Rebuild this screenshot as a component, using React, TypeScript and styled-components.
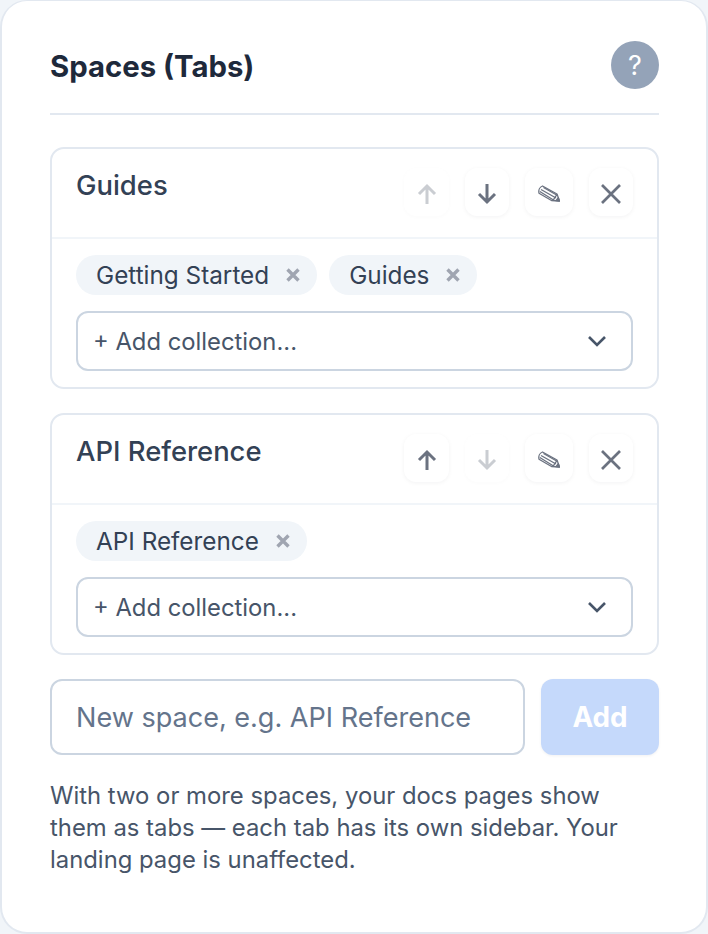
import React from 'react';
import styled, { createGlobalStyle } from 'styled-components';

const GlobalStyle = createGlobalStyle`
  html, body {
    margin: 0;
    background: #f1f5f9;
    font-family: Inter, "Liberation Sans", sans-serif;
  }
  * { box-sizing: border-box; }
`;

const Panel = styled.section`
  width: 708px;
  height: 934px;
  background: #fff;
  border: 2px solid #e2e8f0;
  border-top-width: 1px;
  border-radius: 27px;
  padding: 0 47px 0 48px;
`;

const Header = styled.header`
  display: flex;
  align-items: center;
  justify-content: space-between;
  height: 114px;
  padding-top: 40px;
  padding-bottom: 24px;
  border-bottom: 2px solid #e2e8f0;
  margin-bottom: 32px;
`;

const Title = styled.h2`
  margin: 2px 0 0;
  font-size: 29.3px;
  font-weight: 650;
  color: #1e293b;
`;

const HelpButton = styled.button`
  width: 48px;
  height: 48px;
  border: none;
  border-radius: 50%;
  padding: 0;
  background: #94a3b8;
  color: #fff;
  font: 400 27px Inter, sans-serif;
`;

const SpaceList = styled.div`
  display: flex;
  flex-direction: column;
  gap: 24px;
`;

const SpaceCard = styled.article`
  border: 2px solid #e2e8f0;
  border-radius: 14px;
`;

const SpaceHead = styled.div`
  display: flex;
  justify-content: space-between;
  height: 90px;
  padding: 19px 24px 0 24px;
  border-bottom: 2px solid #f1f5f9;
`;

const SpaceName = styled.h3`
  margin: 0;
  font-size: 27.4px;
  line-height: 34px;
  font-weight: 500;
  color: #334155;
`;

const Actions = styled.div`
  display: flex;
  gap: 16px;
  height: 48px;
`;

const IconButton = styled.button<{ $w: number; $off?: boolean }>`
  display: flex;
  align-items: center;
  justify-content: center;
  width: ${(p) => p.$w}px;
  height: 48px;
  padding: 3px 0 0;
  border: none;
  border-radius: 12px;
  background: #fff;
  color: #6b7280;
  box-shadow: 0 1px 4px rgba(15, 23, 42, ${(p) => (p.$off ? 0.02 : 0.05)});
  svg { opacity: ${(p) => (p.$off ? 0.35 : 1)}; }
`;

const SpaceBody = styled.div`
  display: flex;
  flex-direction: column;
  gap: 16px;
  padding: 16px 24px;
`;

const Chips = styled.div`
  display: flex;
  gap: 12px;
`;

const Chip = styled.span`
  display: flex;
  align-items: center;
  gap: 17px;
  height: 40px;
  padding: 0 17px 0 20px;
  border-radius: 20px;
  background: #f1f5f9;
  font-size: 24.3px;
  color: #334155;
`;

const SelectBox = styled.div`
  display: flex;
  align-items: center;
  justify-content: space-between;
  height: 60px;
  padding: 0 23px 0 15px;
  border: 2px solid #cbd5e1;
  border-radius: 12px;
  font-size: 23.8px;
  color: #475569;
`;

const AddRow = styled.form`
  display: flex;
  gap: 16px;
  margin: 24px 0 25px;
`;

const NameInput = styled.input`
  flex: 1;
  min-width: 0;
  height: 76px;
  padding: 0 24px;
  border: 2px solid #cbd5e1;
  border-radius: 12px;
  outline: none;
  font: 400 27.05px Inter, sans-serif;
  &::placeholder { color: #64748b; opacity: 1; }
`;

const AddButton = styled.button`
  width: 118px;
  height: 76px;
  border: none;
  border-radius: 12px;
  background: #c5d9fb;
  color: #fff;
  font: 700 27.8px Inter, sans-serif;
  box-shadow: 0 1px 3px rgba(15, 23, 42, 0.06);
`;

const Hint = styled.p`
  margin: 0;
  font-size: 23.85px;
  line-height: 32px;
  color: #475569;
`;

const ArrowIcon = ({ up }: { up?: boolean }) => (
  <svg width="24" height="24" viewBox="0 0 24 24" fill="none" stroke="currentColor" strokeWidth="3">
    <path d={up ? 'M12 22V4M4 12l8-8 8 8' : 'M12 2v18M4 12l8 8 8-8'} />
  </svg>
);

const PencilIcon = () => (
  <svg width="22" height="21" viewBox="0 -2 22 21" fill="none" stroke="currentColor" strokeWidth="1.300" strokeLinejoin="round">
    <path d="M4.500 1 19 9l2.500 7-8-.500L1 8.200C.300 5 1.800 2 4.500 1z" />
    <path d="M3 4.500 18 13M1.800 6.500 15.500 15M5.500 2.500 19.500 10.500M15 15.300l4-6" />
    <path d="M21.500 16l-3.500-.300 2.300-3z" fill="currentColor" />
  </svg>
);

const CloseIcon = () => (
  <svg width="22" height="22" viewBox="0 0 22 22" fill="none" stroke="currentColor" strokeWidth="2.700">
    <path d="M2 2l18 18M20 2 2 20" />
  </svg>
);

const ChipClose = () => (
  <svg width="14" height="14" viewBox="0 0 14 14" fill="none" stroke="#a0a5b1" strokeWidth="3.400">
    <path d="M1.500 1.500l11 11M12.500 1.500l-11 11" />
  </svg>
);

const Chevron = () => (
  <svg width="22" height="22" viewBox="0 0 22 22" fill="none" stroke="#475569" strokeWidth="2.600">
    <path d="M3 7l8 8 8-8" />
  </svg>
);

type Space = { name: string; items: string[]; first?: boolean; last?: boolean };

const spaces: Space[] = [
  { name: 'Guides', items: ['Getting Started', 'Guides'], first: true },
  { name: 'API Reference', items: ['API Reference'], last: true },
];

export default function App() {
  return (
    <>
      <GlobalStyle />
      <Panel>
        <Header>
          <Title>Spaces (Tabs)</Title>
          <HelpButton type="button">?</HelpButton>
        </Header>
        <SpaceList>
          {spaces.map((space) => (
            <SpaceCard key={space.name}>
              <SpaceHead>
                <SpaceName>{space.name}</SpaceName>
                <Actions>
                  <IconButton $w={45} $off={space.first}><ArrowIcon up /></IconButton>
                  <IconButton $w={44} $off={space.last}><ArrowIcon /></IconButton>
                  <IconButton $w={48}><PencilIcon /></IconButton>
                  <IconButton $w={44}><CloseIcon /></IconButton>
                </Actions>
              </SpaceHead>
              <SpaceBody>
                <Chips>
                  {space.items.map((item) => (
                    <Chip key={item}>{item}<ChipClose /></Chip>
                  ))}
                </Chips>
                <SelectBox>+ Add collection...<Chevron /></SelectBox>
              </SpaceBody>
            </SpaceCard>
          ))}
        </SpaceList>
        <AddRow>
          <NameInput placeholder="New space, e.g. API Reference" />
          <AddButton type="button">Add</AddButton>
        </AddRow>
        <Hint>
          With two or more spaces, your docs pages show them as tabs — each tab has its own sidebar. Your landing page is unaffected.
        </Hint>
      </Panel>
    </>
  );
}
